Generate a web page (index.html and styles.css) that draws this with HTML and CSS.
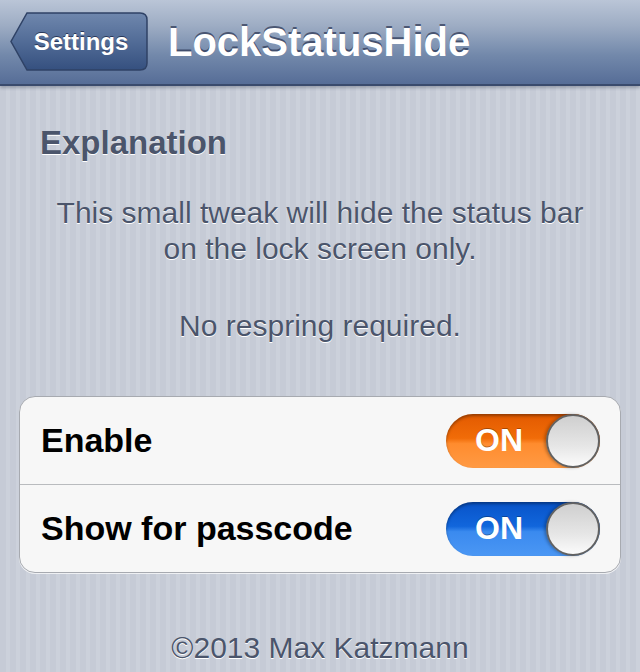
FILE: index.html
```html
<!DOCTYPE html>
<html lang="en">
<head>
  <meta charset="UTF-8">
  <title>LockStatusHide</title>
  <meta name="viewport" content="width=device-width, initial-scale=1">
  <link rel="stylesheet" href="styles.css">
</head>
<body>
  <div class="navbar">
    <a class="back-btn" href="#">
      <svg class="back-shape" viewBox="0 0 138 59" width="138" height="59">
        <defs>
          <linearGradient id="backGrad" x1="0" y1="0" x2="0" y2="1">
            <stop offset="0" stop-color="#6f87ad"/>
            <stop offset="0.5" stop-color="#526c97"/>
            <stop offset="1" stop-color="#35507f"/>
          </linearGradient>
        </defs>
        <path d="M17 1 H130 Q137 1 137 8 V51 Q137 58 130 58 H17 L1 29.5 Z" fill="url(#backGrad)" stroke="#2f4266" stroke-width="1.5"/>
      </svg>
      <span class="back-label">Settings</span>
    </a>
    <div class="nav-title">LockStatusHide</div>
  </div>

  <div class="content">
    <div class="section-title">Explanation</div>
    <p class="note">This small tweak will hide the status bar<br>on the lock screen only.</p>
    <p class="note note-second">No respring required.</p>

    <div class="group">
      <div class="row">
        <span class="row-label">Enable</span>
        <div class="switch switch-orange">
          <span class="switch-text">ON</span>
          <span class="knob"></span>
        </div>
      </div>
      <div class="row">
        <span class="row-label">Show for passcode</span>
        <div class="switch switch-blue">
          <span class="switch-text">ON</span>
          <span class="knob"></span>
        </div>
      </div>
    </div>

    <div class="footer">©2013 Max Katzmann</div>
  </div>
</body>
</html>
```

FILE: styles.css
```css
:root {
  --text-muted: #4b556b;
  --group-bg: #f7f7f7;
  --group-border: #a7aab0;
}
html, body {
  margin: 0;
  padding: 0;
  height: 100%;
  overflow: hidden;
}
body {
  font-family: 'Liberation Sans', Arial, sans-serif;
  background-color: #c8cdd8;
  background-image: repeating-linear-gradient(90deg, #c6cbd6 0, #c6cbd6 6px, #ccd1db 6px, #ccd1db 10px);
}

/* Top navigation bar */
.navbar {
  height: 86px;
  box-sizing: border-box;
  display: flex;
  align-items: center;
  gap: 20px;
  padding: 0 0 1px 10px;
  background: linear-gradient(to bottom, #bac5d7 0%, #9eadc4 30%, #7389ab 65%, #566d97 100%);
  border-bottom: 2px solid #3a4b6d;
  box-shadow: 0 2px 3px rgba(40, 50, 70, 0.3);
}
.back-btn {
  position: relative;
  width: 138px;
  height: 59px;
  display: flex;
  align-items: center;
  justify-content: center;
  padding-left: 4px;
  box-sizing: border-box;
  text-decoration: none;
}
.back-shape {
  position: absolute;
  left: 0;
  top: 0;
}
.back-label {
  position: relative;
  color: #fff;
  font-weight: 700;
  font-size: 24px;
  text-shadow: 0 -1px 0 rgba(20, 30, 60, 0.7);
}
.nav-title {
  color: #fff;
  font-weight: 700;
  font-size: 40px;
  text-shadow: 0 -2px 0 rgba(40, 50, 80, 0.7);
  margin-top: 2px;
}

/* Page content */
.content {
  padding: 40px 19px 0 19px;
}
.section-title {
  color: var(--text-muted);
  font-weight: 700;
  font-size: 33px;
  padding-left: 21px;
  line-height: 34px;
  text-shadow: 0 1px 0 #fff;
}
.note {
  margin: 35px 0 0 0;
  text-align: center;
  color: var(--text-muted);
  font-size: 30px;
  line-height: 36px;
  text-shadow: 0 1px 0 #fff;
}
.note-second {
  margin-top: 41px;
}

.group {
  margin-top: 52px;
  background: var(--group-bg);
  border: 1.5px solid var(--group-border);
  border-radius: 16px;
  box-shadow: 0 1px 0 rgba(255, 255, 255, 0.7);
}
.row {
  height: 87px;
  display: flex;
  align-items: center;
  justify-content: space-between;
  padding: 0 20px 0 21px;
}
.row + .row {
  border-top: 1.5px solid #b9bbbe;
}
.row-label {
  color: #000;
  font-weight: 700;
  font-size: 34px;
}

/* Toggle switch */
.switch {
  position: relative;
  width: 154px;
  height: 54px;
  border-radius: 27px;
  box-sizing: border-box;
  display: flex;
  align-items: center;
  box-shadow: inset 0 2px 3px rgba(0, 0, 0, 0.35);
}
.switch-orange {
  background: linear-gradient(to bottom, #e25a00 0%, #f16c08 45%, #ff8c2e 55%, #ff9a44 100%);
}
.switch-blue {
  background: linear-gradient(to bottom, #0853c8 0%, #1166dc 45%, #3a8aef 55%, #4b97f4 100%);
}
.switch-text {
  width: 106px;
  text-align: center;
  color: #fff;
  font-weight: 700;
  font-size: 32px;
  text-shadow: 0 -1px 0 rgba(0, 0, 0, 0.3);
}
.knob {
  position: absolute;
  right: 0;
  top: 0;
  width: 54px;
  height: 54px;
  box-sizing: border-box;
  border-radius: 50%;
  border: 2px solid #626262;
  background: linear-gradient(to bottom, #cfcfcf 0%, #e6e6e6 60%, #fbfbfb 100%);
  box-shadow: -2px 0 3px rgba(0, 0, 0, 0.25);
}

.footer {
  margin-top: 58px;
  text-align: center;
  color: var(--text-muted);
  font-size: 30px;
  text-shadow: 0 1px 0 #fff;
}
```
